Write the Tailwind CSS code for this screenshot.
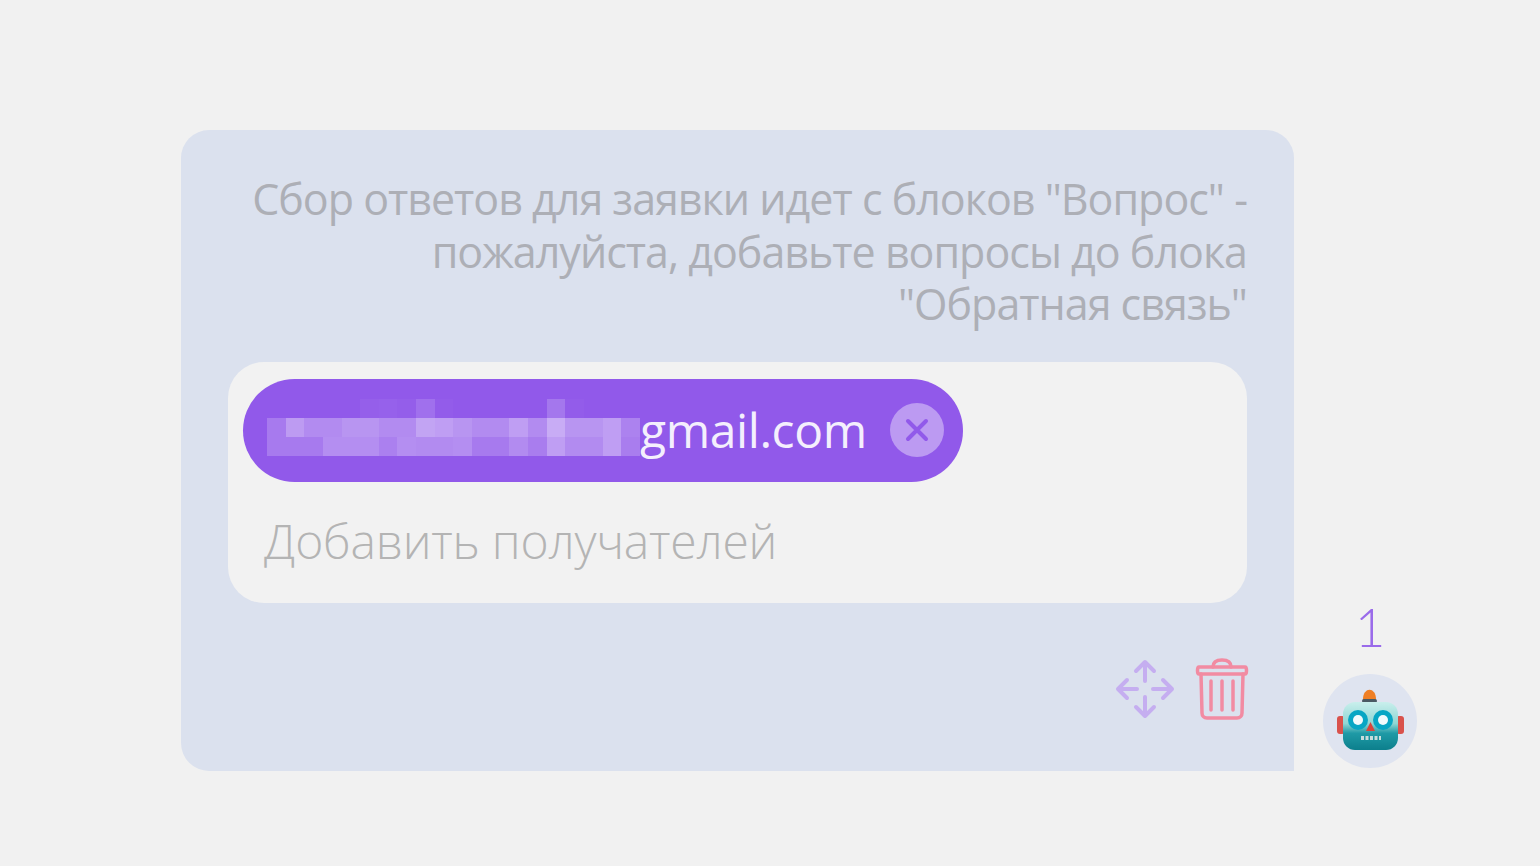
<!doctype html>
<html>

<head>
  <meta charset="UTF-8">
  <meta name="viewport" content="width=device-width, initial-scale=1.0">
  <script src="https://cdn.jsdelivr.net/npm/@tailwindcss/browser@4"></script>
</head>

<body class="bg-[#f1f1f1] font-['Open_Sans',sans-serif] font-light overflow-hidden">
  <div class="h-[866px] w-[1540px] pt-[130px] pl-[181px] flex items-start gap-[29px] blur-[0.5px]">

    <!-- card -->
    <div class="w-[1113px] h-[641px] bg-[#dbe1ee] rounded-t-[28px] rounded-bl-[28px] pt-[43px] pl-[47px] pr-[47px]">
      <p class="text-right text-[43px] leading-[52.5px] tracking-[-1px] font-normal text-[#adafb6]">
        Сбор ответов для заявки идет с блоков "Вопрос" -<br>пожалуйста, добавьте вопросы до блока<br>"Обратная связь"
      </p>

      <div class="mt-[31px] h-[241px] w-[1019px] bg-[#f2f2f2] rounded-[36px] pt-[17px] pl-[15px]">
        <div class="h-[103px] w-[720px] rounded-full bg-[#9159ea] flex items-center pl-[24px]">
          <div id="mosaic" class="grid grid-cols-[repeat(20,18.65px)] grid-rows-[repeat(3,19px)] w-[373px] h-[57px] -mt-[6px]"></div>
          <span class="text-[#f4effd] text-[48px] font-normal tracking-[-0.4px] leading-none -mt-[1px]">gmail.com</span>
          <span class="ml-[23px] w-[54px] h-[54px] rounded-full bg-[#bc9af2] flex items-center justify-center">
            <svg width="24" height="24" viewBox="0 0 24 24" fill="none" stroke="#9159ea" stroke-width="4" stroke-linecap="round">
              <path d="M3 3 21 21M21 3 3 21" />
            </svg>
          </span>
        </div>
        <div class="mt-[30px] pl-[21px] text-[48px] leading-[58px] tracking-[-0.2px] text-[#b4b4b4]">Добавить получателей</div>
      </div>

      <div class="mt-[55px] flex justify-end items-center gap-[20px] w-[1021px]">
        <svg width="60" height="60" viewBox="0 0 60 60" fill="none" stroke="#c5aef0" stroke-width="4" stroke-linecap="round" stroke-linejoin="round">
          <path d="M30 4V22M21 12 30 3 39 12" />
          <path d="M30 38V56M21 48 30 57 39 48" />
          <path d="M4 30H22M12 21 3 30 12 39" />
          <path d="M38 30H56M48 21 57 30 48 39" />
        </svg>
        <svg width="54" height="62" viewBox="0 0 54 62" fill="none" stroke="#f28ba2" stroke-width="3.5" stroke-linecap="round" stroke-linejoin="round">
          <path d="M4 9H50C52 9 52 16 50 16H4C2 16 2 9 4 9Z" />
          <path d="M18 9C18 4 22 2 27 2C32 2 36 4 36 9" />
          <path d="M6 16 7 55C7 58 9 60 12 60H42C45 60 47 58 47 55L48 16" />
          <path d="M16 23V52M27 23V52M38 23V52" />
        </svg>
      </div>
    </div>

    <!-- step counter -->
    <div class="w-[94px] h-[641px] flex flex-col justify-end items-center pb-[3px]">
      <span class="text-[#9a6bea] text-[53px] leading-[50px] font-['Lato',sans-serif] font-light mb-[22px]">1</span>
      <div class="w-[94px] h-[94px] rounded-full bg-[#dfe4f0] flex items-center justify-center">
        <svg width="68" height="64" viewBox="0 0 68 64">
          <defs>
            <linearGradient id="face" x1="0" y1="0" x2="0" y2="1">
              <stop offset="0" stop-color="#c9efec" />
              <stop offset="0.45" stop-color="#8fd6d4" />
              <stop offset="0.65" stop-color="#1f9aa6" />
              <stop offset="1" stop-color="#0c7f8c" />
            </linearGradient>
          </defs>
          <path d="M27 12C26 -3 41 -3 40 12Z" fill="#ef7f24" />
          <rect x="26" y="10" width="15" height="4" rx="2" fill="#4a5a63" />
          <rect x="1" y="27" width="8" height="18" rx="3" fill="#d9524c" />
          <rect x="60" y="27" width="8" height="18" rx="3" fill="#d9524c" />
          <rect x="7" y="13" width="55" height="48" rx="12" fill="url(#face)" />
          <circle cx="22" cy="31" r="10" fill="#07a6c4" />
          <circle cx="22" cy="31" r="5" fill="#f1fafc" />
          <circle cx="47" cy="31" r="10" fill="#07a6c4" />
          <circle cx="47" cy="31" r="5" fill="#f1fafc" />
          <path d="M34.500 33 39 42H30Z" fill="#d9443c" />
          <path d="M25 49H45" stroke="#c7dcdc" stroke-width="4" stroke-dasharray="3 1.500" />
        </svg>
      </div>
    </div>
  </div>

  <script>
    // blurred part of the address, white opacity per cell
    const cells = [
      [0, 0, 0, 0, 0, .04, .05, .03, .14, .02, 0, 0, 0, 0, 0, .18, .02, 0, 0, 0],
      [.2, .4, .3, .3, .36, .36, .3, .3, .45, .42, .36, .3, .3, .42, .3, .5, .36, .36, .42, .25],
      [.2, .2, .2, .32, .32, .32, .24, .32, .3, .3, .32, .2, .2, .3, .22, .42, .3, .3, .42, .22]
    ];
    const mosaic = document.getElementById("mosaic");
    cells.flat().forEach((o) => {
      const cell = document.createElement("div");
      cell.style.backgroundColor = `rgba(255,255,255,${o})`;
      mosaic.appendChild(cell);
    });
  </script>
</body>

</html>
